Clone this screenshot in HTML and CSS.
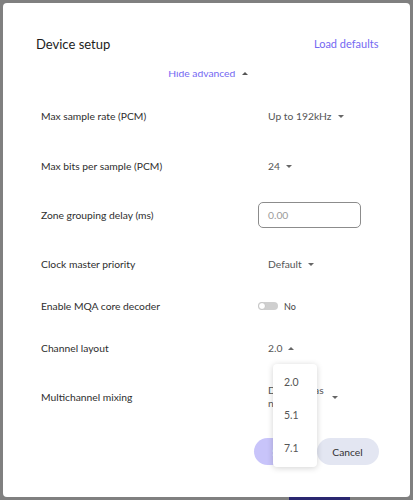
FILE: index.html
```html
<!DOCTYPE html>
<html>
<head>
<meta charset="utf-8">
<link rel="stylesheet" href="styles.css">
</head>
<body>
<div class="screen">
  <div class="modal">
    <div class="header">
      <div class="title">Device setup</div>
      <div class="link">Load defaults</div>
    </div>
    <div class="body">
      <div class="inner">
        <div class="adv"><span class="link">Hide advanced</span><span class="caret up purple"></span></div>
        <div class="row r50"><div class="label">Max sample rate (PCM)</div><div class="value"><div class="select"><span>Up to 192kHz</span><span class="caret down"></span></div></div></div>
        <div class="row r50"><div class="label">Max bits per sample (PCM)</div><div class="value"><div class="select"><span>24</span><span class="caret down"></span></div></div></div>
        <div class="row r48"><div class="label">Zone grouping delay (ms)</div><div class="value"><div class="input">0.00</div></div></div>
        <div class="row r50"><div class="label">Clock master priority</div><div class="value"><div class="select"><span>Default</span><span class="caret down"></span></div></div></div>
        <div class="row r34"><div class="label">Enable MQA core decoder</div><div class="value"><div class="toggle"><span class="track"><span class="knob"></span></span><span class="tlabel">No</span></div></div></div>
        <div class="row r50"><div class="label">Channel layout</div><div class="value"><div class="select"><span>2.0</span><span class="caret up"></span></div></div></div>
        <div class="row r48"><div class="label">Multichannel mixing</div><div class="value"><div class="select"><span class="wrap">Downmix as needed</span><span class="caret down"></span></div></div></div>
        <div class="buttons">
          <div class="btn save">Save</div>
          <div class="btn cancel">Cancel</div>
        </div>
      </div>
      <div class="menu">
        <div class="item">2.0</div>
        <div class="item">5.1</div>
        <div class="item">7.1</div>
      </div>
    </div>
  </div>
  <div class="under">
    <span class="num">181</span>
    <span class="name">Studiolink Classic USB</span>
    <span class="blk"></span>
    <span class="num2">181</span>
  </div>
</div>
</body>
</html>
```

FILE: styles.css
```css
html, body {
  margin: 0;
  padding: 0;
}
body {
  background: #808080;
  font-family: Lato, "Noto Sans", sans-serif;
  width: 413px;
  height: 500px;
  overflow: hidden;
}
.screen {
  padding: 3px 3.5px 0 3px;
  height: 500px;
  box-sizing: border-box;
  overflow: hidden;
}
.modal {
  background: #fff;
  border-radius: 4px;
  height: 494px;
  display: flex;
  flex-direction: column;
  position: relative;
}
.header {
  height: 68px;
  box-sizing: border-box;
  padding: 32px 31px 0 33px;
  display: flex;
  justify-content: space-between;
  align-items: flex-start;
}
.title {
  font-size: 13px;
  line-height: 18px;
  color: #1c1c1c;
}
.header .link {
  font-size: 11px;
  line-height: 18px;
}
.link {
  color: #7468f2;
}
.body {
  flex: 1;
  overflow: hidden;
  position: relative;
}
.inner {
  margin-top: -8px;
}
.adv {
  height: 20px;
  line-height: 20px;
  font-size: 10.3px;
  display: flex;
  justify-content: center;
  align-items: center;
  gap: 7px;
  margin-bottom: 8px;
  padding-left: 4px;
}
.caret {
  display: inline-block;
  width: 0;
  height: 0;
  border-left: 3px solid transparent;
  border-right: 3px solid transparent;
}
.caret.down {
  border-top: 3px solid #666;
}
.caret.up {
  border-bottom: 3px solid #666;
}
.caret.up.purple {
  border-bottom-color: #555;
}
.row {
  display: grid;
  grid-template-columns: 217px 1fr;
  padding: 0 0 0 38px;
  align-items: center;
}
.r50 { height: 50px; }
.r48 { height: 48px; }
.r34 { height: 34px; }
.label {
  font-size: 10.3px;
  color: #2e2e2e;
}
.value {
  display: flex;
  align-items: center;
}
.select {
  display: flex;
  align-items: center;
  gap: 6px;
  padding-left: 10px;
  font-size: 10.3px;
  color: #555;
}
.wrap {
  width: 58px;
  line-height: 13px;
}
.input {
  width: 103px;
  height: 26px;
  box-sizing: border-box;
  border: 1px solid #8c8c8c;
  border-radius: 5px;
  padding-left: 9px;
  font-size: 10.3px;
  color: #9a9a9a;
  display: flex;
  align-items: center;
}
.toggle {
  display: flex;
  align-items: center;
  gap: 6px;
}
.track {
  width: 20px;
  height: 8px;
  border-radius: 4px;
  background: #cfcfcf;
  position: relative;
}
.knob {
  position: absolute;
  left: 0;
  top: 0;
  width: 8px;
  height: 8px;
  box-sizing: border-box;
  border-radius: 50%;
  background: #fff;
  border: 1px solid #c4c4c4;
}
.tlabel {
  font-size: 9px;
  color: #444;
}
.buttons {
  display: flex;
  justify-content: flex-end;
  gap: 5px;
  padding-right: 31px;
  margin-top: 17px;
}
.btn {
  height: 27px;
  border-radius: 14px;
  font-size: 10.3px;
  display: flex;
  align-items: center;
  justify-content: center;
}
.save {
  width: 58px;
  background: #c8c4fa;
  color: #fff;
}
.cancel {
  width: 62px;
  background: #e3e6f2;
  color: #333;
}
.menu {
  position: absolute;
  left: 270px;
  top: 293px;
  width: 44px;
  padding: 2px 0;
  background: #fff;
  border-radius: 4px;
  box-shadow: 0 1px 6px rgba(0,0,0,0.18);
}
.item {
  height: 33px;
  line-height: 33px;
  padding-left: 11px;
  font-size: 10.5px;
  color: #555;
}
.under {
  display: flex;
  align-items: flex-start;
  height: 20px;
  font-size: 14px;
  color: #111;
  line-height: 20px;
}
.under .num {
  margin-left: 20px;
  width: 34px;
  font-size: 10px;
}
.under .name {
  width: 232px;
}
.under .blk {
  width: 61px;
  height: 20px;
  background: #2a2870;
}
.under .num2 {
  margin-left: 38px;
  font-size: 10px;
}
```
